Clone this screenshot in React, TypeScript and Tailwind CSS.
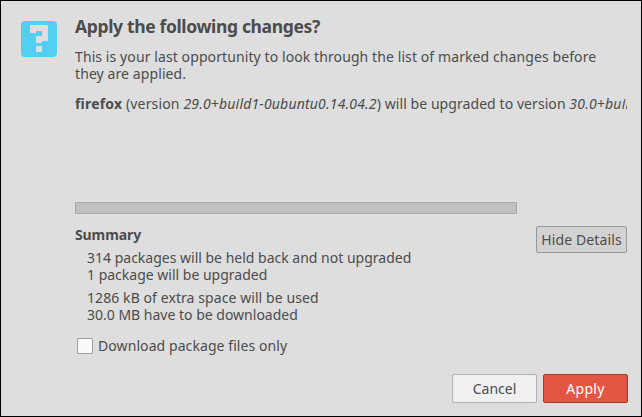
import React from 'react';

function QuestionIcon() {
  return (
    <svg className="h-9 w-9 shrink-0" viewBox="0 0 36 36">
      <rect x="0" y="0" width="36" height="36" rx="4" fill="#55cff1" />
      <path d="M9 4h18v16h-6v2h-6v-7h6v-5h-6v2h-6zM15 25h6v6h-6z" fill="#dedede" />
    </svg>
  );
}

export default function App() {
  return (
    <div className="h-[417px] w-[642px] overflow-hidden border border-black bg-[#dedede] font-['Noto_Sans','Open_Sans',sans-serif] text-[14px] leading-[17px] text-[#4c4c4c]">
      <div className="flex pl-5 pt-[13px]">
        <div className="pt-[7px]">
          <QuestionIcon />
        </div>
        <div className="ml-[18px] w-[552px] whitespace-nowrap">
          <h1 className="h-[25px] text-[17.5px] font-bold leading-[24px] tracking-[-0.35px]">Apply the following changes?</h1>
          <p className="mt-[9px] h-[35px] tracking-[0.095px]">
            This is your last opportunity to look through the list of marked changes before
            <br />
            they are applied.
          </p>
          <div className="mt-[12px] h-[107px] overflow-hidden">
            <b className="tracking-[0.2px]">firefox</b> <span className="tracking-[0.15px]">(version </span>
            <i className="tracking-[0.18px]">29.0+build1-0ubuntu0.14.04.2</i>
            <span className="tracking-[0.07px]">) will be upgraded to version </span>
            <i className="tracking-[0.2px]">30.0+build1-0ubuntu0.14.04.3</i>
          </div>
          <div className="h-3 w-[442px] border border-[#a8a8a8] bg-[#c1c1c1]" />
          <div className="mt-3 flex items-start justify-between">
            <div>
              <h2 className="font-bold tracking-[-0.1px]">Summary</h2>
              <div className="ml-3 mt-[6px]">
                <p>314 packages will be held back and not upgraded</p>
                <p>1 package will be upgraded</p>
                <p className="mt-[6px] tracking-[0.08px]">1286 kB of extra space will be used</p>
                <p>30.0 MB have to be downloaded</p>
              </div>
            </div>
            <button className="h-[27px] w-[91px] rounded-[2px] border border-[#999] bg-[#d2d2d2] tracking-[0.12px]">Hide Details</button>
          </div>
          <label className="mt-[13px] flex h-[19px] items-center pl-[2px]">
            <span className="h-4 w-4 rounded-[1px] border border-[#a0a0a0] bg-[#fafafa]" />
            <span className="ml-[5px] tracking-[0.08px]">Download package files only</span>
          </label>
        </div>
      </div>
      <div className="mt-[19px] flex justify-end gap-[6px] pr-[13px]">
        <button className="h-[29px] w-[85px] rounded-[2px] border border-[#b0b0b0] bg-[#f0f0f0]">Cancel</button>
        <button className="h-[29px] w-[85px] rounded-[2px] border border-[#a83a2b] bg-[#e35644] tracking-[0.3px] text-white">Apply</button>
      </div>
    </div>
  );
}
